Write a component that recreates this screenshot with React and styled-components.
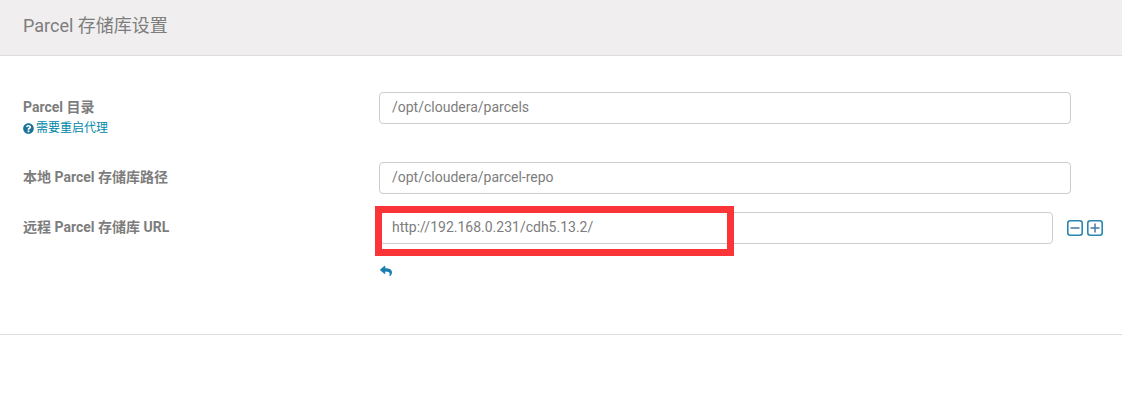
import React from "react";
import styled, { createGlobalStyle } from "styled-components";
import { FaQuestionCircle, FaReply } from "react-icons/fa";

const GlobalStyle = createGlobalStyle`
  html, body {
    margin: 0;
    padding: 0;
    background: #fff;
    font-family: Roboto, "Noto Sans CJK SC", sans-serif;
  }
`;

const Page = styled.div`
  position: relative;
  width: 1122px;
  height: 406px;
  overflow: hidden;
`;

const Header = styled.div`
  height: 55px;
  box-sizing: content-box;
  display: flex;
  align-items: center;
  padding-left: 23px;
  background-color: #f0eeef;
  border-bottom: 1px solid #ddd;
`;

const Title = styled.h3`
  margin: 0 0 8px;
  font-size: 18px;
  font-weight: 400;
  color: #7d7d7d;
`;

const Form = styled.div`
  height: 279px;
  padding: 36px 0 0 23px;
  box-sizing: border-box;
  border-bottom: 1px solid #ddd;
`;

const Row = styled.div`
  display: flex;
  align-items: flex-start;
  margin-bottom: ${(p) => p.$gap}px;
`;

const LabelCol = styled.div`
  width: 356px;
  flex-shrink: 0;
  padding-top: 7px;
`;

const Label = styled.div`
  font-size: 14px;
  line-height: 16px;
  font-weight: 700;
  color: #7d7d7d;
`;

const Hint = styled.div`
  display: flex;
  align-items: center;
  gap: 2px;
  margin-top: 6px;
  font-size: 12px;
  line-height: 14px;
  color: #0088a8;

  svg {
    width: 11px;
    height: 11px;
    color: #1a7299;
  }
`;

const Field = styled.div`
  width: ${(p) => p.$width}px;
  height: 32px;
  box-sizing: border-box;
  display: flex;
  align-items: center;
  padding: 0 0 2px 12px;
  background: #fff;
  border: 1px solid #ccc;
  border-radius: 4px;
  font-size: 14px;
  color: #7d7d7d;
`;

const RepoCol = styled.div`
  display: flex;
  flex-direction: column;
`;

const RepoLine = styled.div`
  display: flex;
  align-items: center;
`;

const SquareButtons = styled.div`
  display: flex;
  gap: 4px;
  margin-left: 14px;
`;

const SquareIcon = styled.svg`
  width: 16px;
  height: 16px;
  display: block;
`;

const UndoLink = styled.div`
  margin-top: 21px;
  padding-left: 1px;
  height: 14px;
  color: #1a7fb0;

  svg {
    display: block;
    width: 12px;
    height: 12px;
  }
`;

const Highlight = styled.div`
  position: absolute;
  left: 375px;
  top: 206px;
  width: 359px;
  height: 50px;
  box-sizing: border-box;
  border: 7px solid #fb3537;
`;

const Square = ({ plus }) => (
  <SquareIcon viewBox="0 0 16 16" fill="none" stroke="#2a87b0" strokeWidth="1.6">
    <rect x="0.8" y="0.8" width="14.4" height="14.4" rx="2.5" />
    <path d="M3.5 8H12.5" stroke="#4c7fa8" />
    {plus && <path d="M8 3.5V12.5" stroke="#4c7fa8" />}
  </SquareIcon>
);

export default function App() {
  return (
    <Page>
      <GlobalStyle />
      <Header>
        <Title>Parcel 存储库设置</Title>
      </Header>
      <Form>
        <Row $gap={27}>
          <LabelCol>
            <Label>Parcel 目录</Label>
            <Hint>
              <FaQuestionCircle />
              需要重启代理
            </Hint>
          </LabelCol>
          <Field $width={692}>/opt/cloudera/parcels</Field>
        </Row>
        <Row $gap={18}>
          <LabelCol>
            <Label>本地 Parcel 存储库路径</Label>
          </LabelCol>
          <Field $width={692}>/opt/cloudera/parcel-repo</Field>
        </Row>
        <Row $gap={0}>
          <LabelCol>
            <Label>远程 Parcel 存储库 URL</Label>
          </LabelCol>
          <RepoCol>
            <RepoLine>
              <Field $width={674}>http://192.168.0.231/cdh5.13.2/</Field>
              <SquareButtons>
                <Square />
                <Square plus />
              </SquareButtons>
            </RepoLine>
            <UndoLink>
              <FaReply />
            </UndoLink>
          </RepoCol>
        </Row>
      </Form>
      <Highlight />
    </Page>
  );
}
